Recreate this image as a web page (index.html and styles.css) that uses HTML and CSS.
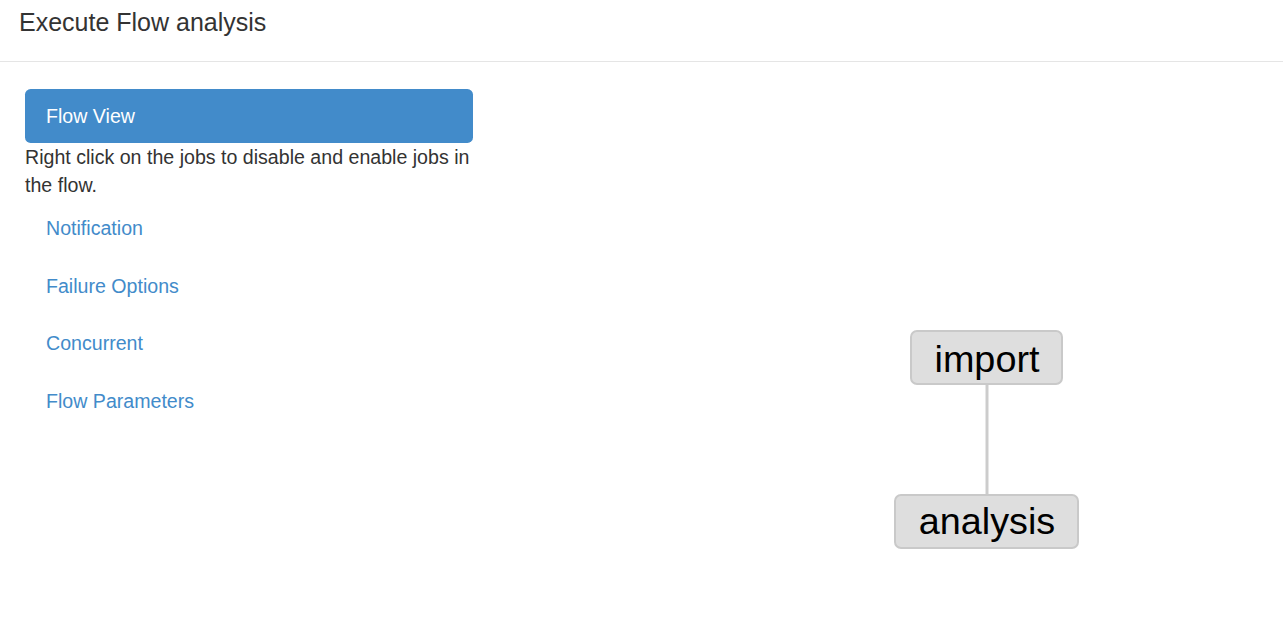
FILE: index.html
```html
<!DOCTYPE html>
<html>
<head>
<meta charset="utf-8">
<title>Execute Flow analysis</title>
<link rel="stylesheet" href="styles.css">
</head>
<body>
<div class="modal">
  <div class="modal-header">
    <h4 class="modal-title">Execute Flow analysis</h4>
  </div>
  <div class="modal-body">
    <div class="sidebar">
      <ul class="pills">
        <li class="pill active"><a href="#">Flow View</a></li>
        <li class="pill-note">Right click on the jobs to disable and enable jobs in the flow.</li>
        <li class="pill"><a href="#">Notification</a></li>
        <li class="pill"><a href="#">Failure Options</a></li>
        <li class="pill"><a href="#">Concurrent</a></li>
        <li class="pill"><a href="#">Flow Parameters</a></li>
      </ul>
    </div>
    <div class="graph">
      <svg class="graph-svg" xmlns="http://www.w3.org/2000/svg">
        <line class="edge" x1="514" y1="323" x2="514" y2="433"></line>
        <rect class="node" x="438" y="269" width="151" height="53" rx="6" ry="6"></rect>
        <text class="node-label" x="514" y="310">import</text>
        <rect class="node" x="422" y="433" width="183" height="53" rx="6" ry="6"></rect>
        <text class="node-label" x="514" y="472">analysis</text>
      </svg>
    </div>
  </div>
</div>
</body>
</html>
```

FILE: styles.css
```css
* { box-sizing: border-box; }
html, body { margin: 0; padding: 0; background: #fff; }
body {
  font-family: "Liberation Sans", Arial, sans-serif;
  color: #333;
  font-size: 19.6px;
  line-height: 28px;
  width: 1283px;
  height: 626px;
  overflow: hidden;
}
.modal { display: flex; flex-direction: column; height: 626px; }
.modal-header {
  height: 62px;
  border-bottom: 1px solid #e5e5e5;
  padding: 4px 19px 0;
}
.modal-title {
  margin: 0;
  font-size: 25px;
  font-weight: normal;
  line-height: 36px;
  color: #333;
}
.modal-body {
  flex: 1;
  display: flex;
  padding: 0 0 0 25px;
}
.sidebar { width: 448px; padding-top: 27px; }
.pills { list-style: none; margin: 0; padding: 0; }
.pill a {
  display: block;
  padding: 13.4px 21px;
  text-decoration: none;
  color: #428bca;
  border-radius: 5.6px;
  line-height: 28px;
}
.pill { margin-bottom: 2.8px; }
.pill.active { margin-bottom: 0; }
.pill.active a { background: #428bca; color: #fff; padding: 13px 21px; }
.pill-note { margin: 0 0 1.6px; }
.graph { flex: 1; position: relative; }
.graph-svg { position: absolute; left: 0; top: 0; width: 100%; height: 100%; }
.edge { stroke: #ccc; stroke-width: 3; }
.node { fill: #dedede; stroke: #c9c9c9; stroke-width: 2; }
.node-label {
  font-family: "Liberation Sans", Arial, sans-serif;
  font-size: 37.8px;
  fill: #000;
  text-anchor: middle;
}
```
